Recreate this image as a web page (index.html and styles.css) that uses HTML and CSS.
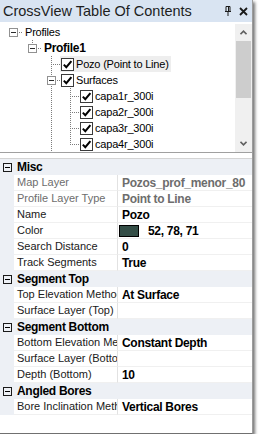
FILE: index.html
```html
<!DOCTYPE html>
<html lang="en">
<head>
    <meta charset="UTF-8">
    <title>CrossView Table Of Contents</title>
    <link rel="stylesheet" href="styles.css">
</head>
<body>
    <div class="window">
        <div class="titlebar">
            <span class="title">CrossView Table Of Contents</span>
            <svg class="pin" width="8" height="10" viewBox="0 0 8 10">
                <path d="M2 0.5h4v5h-4z M1 5.5h6 M4 5.5v4.5" fill="none" stroke="#1a1a1a" stroke-width="1"/>
                <path d="M4.5 1v4" stroke="#1a1a1a" stroke-width="1"/>
            </svg>
            <svg class="close" width="9" height="9" viewBox="0 0 9 9">
                <path d="M1 1L8 8M8 1L1 8" stroke="#1a1a1a" stroke-width="1.8"/>
            </svg>
        </div>

        <div class="tree-panel">
            <div class="tree">
                <div class="node">
                    <span class="slot root"><span class="toggle"></span></span>
                    <span class="text">Profiles</span>
                </div>
                <div class="node">
                    <span class="slot"></span>
                    <span class="slot box-top"><span class="toggle"></span></span>
                    <span class="text bold">Profile1</span>
                </div>
                <div class="node">
                    <span class="slot"></span>
                    <span class="slot"></span>
                    <span class="slot tee"></span>
                    <span class="item selected">
                        <span class="check"><svg width="11" height="11" viewBox="0 0 11 11"><path d="M1.8 5.6L4.3 8.2L9.4 2.2" fill="none" stroke="#000" stroke-width="2"/></svg></span>
                        <span class="text">Pozo (Point to Line)</span>
                    </span>
                </div>
                <div class="node">
                    <span class="slot"></span>
                    <span class="slot"></span>
                    <span class="slot box-pipe"><span class="toggle"></span></span>
                    <span class="item">
                        <span class="check"><svg width="11" height="11" viewBox="0 0 11 11"><path d="M1.8 5.6L4.3 8.2L9.4 2.2" fill="none" stroke="#000" stroke-width="2"/></svg></span>
                        <span class="text">Surfaces</span>
                    </span>
                </div>
                <div class="node">
                    <span class="slot"></span>
                    <span class="slot"></span>
                    <span class="slot pipe"></span>
                    <span class="slot tee"></span>
                    <span class="item">
                        <span class="check"><svg width="11" height="11" viewBox="0 0 11 11"><path d="M1.8 5.6L4.3 8.2L9.4 2.2" fill="none" stroke="#000" stroke-width="2"/></svg></span>
                        <span class="text">capa1r_300i</span>
                    </span>
                </div>
                <div class="node">
                    <span class="slot"></span>
                    <span class="slot"></span>
                    <span class="slot pipe"></span>
                    <span class="slot tee"></span>
                    <span class="item">
                        <span class="check"><svg width="11" height="11" viewBox="0 0 11 11"><path d="M1.8 5.6L4.3 8.2L9.4 2.2" fill="none" stroke="#000" stroke-width="2"/></svg></span>
                        <span class="text">capa2r_300i</span>
                    </span>
                </div>
                <div class="node">
                    <span class="slot"></span>
                    <span class="slot"></span>
                    <span class="slot pipe"></span>
                    <span class="slot tee"></span>
                    <span class="item">
                        <span class="check"><svg width="11" height="11" viewBox="0 0 11 11"><path d="M1.8 5.6L4.3 8.2L9.4 2.2" fill="none" stroke="#000" stroke-width="2"/></svg></span>
                        <span class="text">capa3r_300i</span>
                    </span>
                </div>
                <div class="node">
                    <span class="slot"></span>
                    <span class="slot"></span>
                    <span class="slot pipe"></span>
                    <span class="slot elbow"></span>
                    <span class="item">
                        <span class="check"><svg width="11" height="11" viewBox="0 0 11 11"><path d="M1.8 5.6L4.3 8.2L9.4 2.2" fill="none" stroke="#000" stroke-width="2"/></svg></span>
                        <span class="text">capa4r_300i</span>
                    </span>
                </div>
            </div>
            <div class="scrollbar">
                <div class="arrow"><svg width="7" height="5" viewBox="0 0 7 5"><path d="M0.5 4.2L3.5 1.2L6.5 4.2" fill="none" stroke="#606060" stroke-width="1.6"/></svg></div>
                <div class="thumb"></div>
                <div class="track"></div>
                <div class="arrow"><svg width="7" height="5" viewBox="0 0 7 5"><path d="M0.5 0.8L3.5 3.8L6.5 0.8" fill="none" stroke="#606060" stroke-width="1.6"/></svg></div>
            </div>
        </div>

        <div class="grid">
            <div class="prow cat"><span class="cat-toggle"></span><span class="cat-name">Misc</span></div>
            <div class="prow disabled"><span class="margin"></span><span class="label">Map Layer</span><span class="value">Pozos_prof_menor_80</span></div>
            <div class="prow disabled"><span class="margin"></span><span class="label">Profile Layer Type</span><span class="value">Point to Line</span></div>
            <div class="prow"><span class="margin"></span><span class="label">Name</span><span class="value">Pozo</span></div>
            <div class="prow"><span class="margin"></span><span class="label">Color</span><span class="value"><span class="swatch"></span>52, 78, 71</span></div>
            <div class="prow"><span class="margin"></span><span class="label">Search Distance</span><span class="value">0</span></div>
            <div class="prow"><span class="margin"></span><span class="label">Track Segments</span><span class="value">True</span></div>
            <div class="prow cat"><span class="cat-toggle"></span><span class="cat-name">Segment Top</span></div>
            <div class="prow"><span class="margin"></span><span class="label">Top Elevation Method</span><span class="value">At Surface</span></div>
            <div class="prow"><span class="margin"></span><span class="label">Surface Layer (Top)</span><span class="value"></span></div>
            <div class="prow cat"><span class="cat-toggle"></span><span class="cat-name">Segment Bottom</span></div>
            <div class="prow"><span class="margin"></span><span class="label">Bottom Elevation Method</span><span class="value">Constant Depth</span></div>
            <div class="prow"><span class="margin"></span><span class="label">Surface Layer (Bottom)</span><span class="value"></span></div>
            <div class="prow"><span class="margin"></span><span class="label">Depth (Bottom)</span><span class="value">10</span></div>
            <div class="prow cat"><span class="cat-toggle"></span><span class="cat-name">Angled Bores</span></div>
            <div class="prow"><span class="margin"></span><span class="label">Bore Inclination Method</span><span class="value">Vertical Bores</span></div>
        </div>
    </div>
</body>
</html>
```

FILE: styles.css
```css
body {
    margin: 0;
    background: #fff;
    font-family: "Liberation Sans", Arial, sans-serif;
    color: #000;
}

.window {
    width: 253px;
    height: 434px;
    box-sizing: border-box;
    border-right: 1px solid #9c9c9c;
    border-bottom: 1px solid #707070;
    box-shadow: 2px 2px 3px rgba(0,0,0,0.55);
    display: flex;
    flex-direction: column;
    background: #fff;
}

/* title bar */
.titlebar {
    height: 22px;
    flex: none;
    display: flex;
    align-items: center;
    padding: 0 3px;
    background: #d9e4f2;
    font-size: 14.5px;
    color: #1e1e1e;
}

.title {
    flex: 1;
}

.pin {
    margin-right: 7px;
}

.close {
    margin-right: 1px;
}

/* tree */
.tree-panel {
    height: 131px;
    flex: none;
    display: flex;
    box-sizing: border-box;
    padding-top: 2px;
    border-bottom: 1px solid #a0a0a0;
}

.tree {
    flex: 1;
    padding-left: 3px;
    overflow: hidden;
}

.node {
    display: flex;
    align-items: center;
    height: 16px;
    font-size: 11px;
    letter-spacing: -0.2px;
    white-space: nowrap;
}

.slot {
    width: 19px;
    height: 16px;
    flex: none;
    display: flex;
    align-items: center;
    background-repeat: no-repeat;
}

.slot.pipe {
    background-image: repeating-linear-gradient(to bottom, #7c7c7c 0 1px, transparent 1px 2px);
    background-size: 1px 16px;
    background-position: 10px 0;
}

.slot.tee {
    background-image:
        repeating-linear-gradient(to bottom, #7c7c7c 0 1px, transparent 1px 2px),
        repeating-linear-gradient(to right, #7c7c7c 0 1px, transparent 1px 2px);
    background-size: 1px 16px, 9px 1px;
    background-position: 10px 0, 10px 8px;
}

.slot.elbow {
    background-image:
        repeating-linear-gradient(to bottom, #7c7c7c 0 1px, transparent 1px 2px),
        repeating-linear-gradient(to right, #7c7c7c 0 1px, transparent 1px 2px);
    background-size: 1px 8px, 9px 1px;
    background-position: 10px 0, 10px 8px;
}

.slot.root {
    background-image: repeating-linear-gradient(to right, #7c7c7c 0 1px, transparent 1px 2px);
    background-size: 4px 1px;
    background-position: 16px 8px;
}

.slot.box-top {
    background-image:
        repeating-linear-gradient(to bottom, #7c7c7c 0 1px, transparent 1px 2px),
        repeating-linear-gradient(to right, #7c7c7c 0 1px, transparent 1px 2px);
    background-size: 1px 4px, 4px 1px;
    background-position: 10px 0, 16px 8px;
}

.slot.box-pipe {
    background-image:
        repeating-linear-gradient(to bottom, #7c7c7c 0 1px, transparent 1px 2px),
        repeating-linear-gradient(to right, #7c7c7c 0 1px, transparent 1px 2px);
    background-size: 1px 16px, 4px 1px;
    background-position: 10px 0, 16px 8px;
}

.toggle {
    width: 9px;
    height: 9px;
    box-sizing: border-box;
    margin-left: 6px;
    border: 1px solid #919191;
    background: #fff;
    display: flex;
    align-items: center;
    justify-content: center;
}

.toggle::before {
    content: "";
    width: 5px;
    height: 1px;
    background: #2b2b2b;
}

.text {
    margin-left: 3px;
}

.text.bold {
    font-weight: bold;
    font-size: 12px;
    letter-spacing: -0.3px;
}

.item {
    display: flex;
    align-items: center;
    height: 16px;
    padding-right: 2px;
}

.item.selected {
    background: #eeeeee;
}

.check {
    width: 13px;
    height: 13px;
    box-sizing: border-box;
    margin-left: 1px;
    border: 1px solid #3a3a3a;
    background: #fff;
    display: flex;
}

.item .text {
    margin-left: 2px;
}

/* scrollbar */
.scrollbar {
    width: 17px;
    flex: none;
    display: flex;
    flex-direction: column;
    background: #f0f0f0;
}

.arrow {
    height: 17px;
    display: flex;
    align-items: center;
    justify-content: center;
}

.thumb {
    height: 57px;
    margin: 0 1px;
    background: #cdcdcd;
}

.track {
    flex: 1;
}

/* property grid */
.grid {
    margin-top: 5px;
    flex: 1;
    border-top: 1px solid #d4d4d4;
}

.prow {
    display: flex;
    height: 16px;
    align-items: stretch;
}

.prow .margin {
    width: 14px;
    flex: none;
    background: #edf0f5;
}

.prow .label {
    width: 104px;
    flex: none;
    box-sizing: border-box;
    padding-left: 3px;
    border-right: 1px solid #e2e2e2;
    border-bottom: 1px solid #f0f0f0;
    font-size: 11px;
    line-height: 15px;
    color: #202020;
    white-space: nowrap;
    overflow: hidden;
}

.prow .value {
    flex: 1;
    display: flex;
    align-items: center;
    padding-left: 4px;
    border-bottom: 1px solid #f0f0f0;
    font-size: 12px;
    font-weight: bold;
    letter-spacing: -0.3px;
    white-space: nowrap;
    overflow: hidden;
}

.prow.disabled .label,
.prow.disabled .value {
    color: #6d6d6d;
}

.swatch {
    width: 20px;
    height: 12px;
    box-sizing: border-box;
    margin-left: -3px;
    margin-right: 9px;
    border: 1px solid #000;
    background: rgb(52, 78, 71);
}

.prow.cat {
    background: #edf0f5;
    align-items: center;
}

.cat-toggle {
    width: 9px;
    height: 9px;
    box-sizing: border-box;
    margin-left: 3px;
    border: 1px solid #1a1a1a;
    display: flex;
    align-items: center;
    justify-content: center;
}

.cat-toggle::before {
    content: "";
    width: 5px;
    height: 1px;
    background: #000;
}

.cat-name {
    margin-left: 5px;
    font-size: 12px;
    font-weight: bold;
    letter-spacing: -0.3px;
}
```
